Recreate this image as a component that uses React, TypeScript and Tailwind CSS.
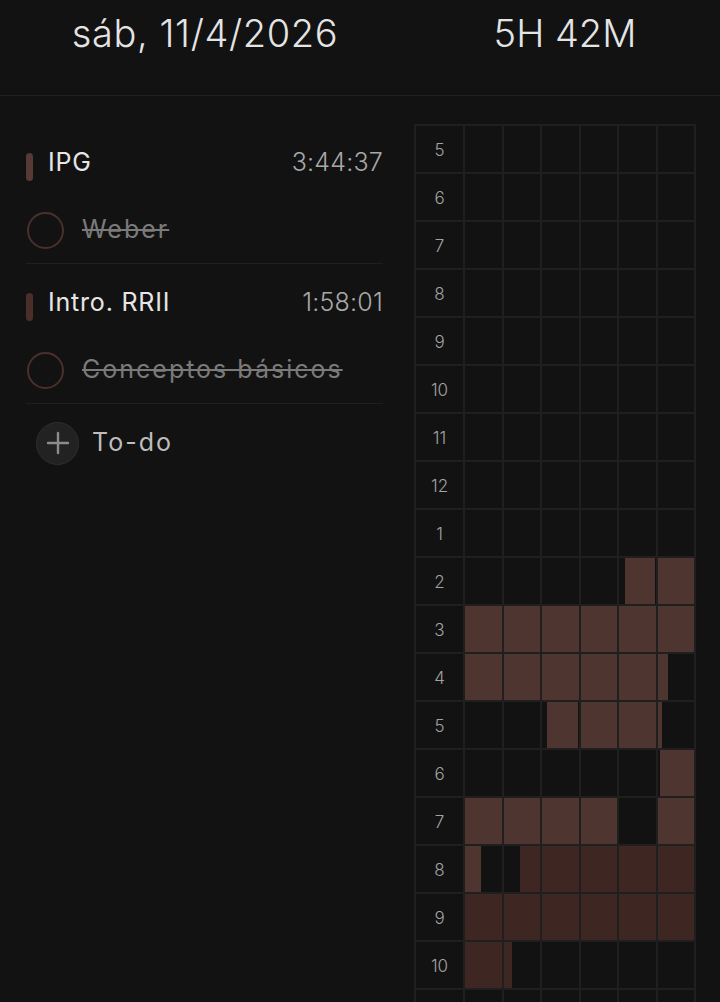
import React from "react";

type Fill = { s: number; e: number; c: "l" | "d" };

const LIGHT = "#4e3530";
const DARK = "#3e2723";

const labels: (number | null)[] = [5, 6, 7, 8, 9, 10, 11, 12, 1, 2, 3, 4, 5, 6, 7, 8, 9, 10, null];

const fills: Record<number, Fill[]> = {
  9: [{ s: 41.6, e: 60, c: "l" }],
  10: [{ s: 0, e: 60, c: "l" }],
  11: [{ s: 0, e: 52.9, c: "l" }],
  12: [{ s: 21.4, e: 51.2, c: "l" }],
  13: [{ s: 50.7, e: 60, c: "l" }],
  14: [
    { s: 0, e: 40, c: "l" },
    { s: 50, e: 60, c: "l" },
  ],
  15: [
    { s: 0, e: 4.4, c: "l" },
    { s: 14.5, e: 60, c: "d" },
  ],
  16: [{ s: 0, e: 60, c: "d" }],
  17: [{ s: 0, e: 12.3, c: "d" }],
};

const font = { fontFamily: "Inter, 'Noto Sans', sans-serif" };

function Cell({ col, row }: { col: number; row: number }) {
  const parts = (fills[row] || [])
    .map((f) => {
      const a = Math.max(f.s, col * 10);
      const b = Math.min(f.e, col * 10 + 10);
      if (b <= a) return null;
      return { left: ((a - col * 10) / 10) * 100, width: ((b - a) / 10) * 100, c: f.c };
    })
    .filter(Boolean) as { left: number; width: number; c: "l" | "d" }[];
  return (
    <div className="relative flex-1 h-full border-r-2 border-[#1f1f1f]">
      {parts.map((p, i) => (
        <div
          key={i}
          className="absolute top-0 bottom-0"
          style={{ left: `${p.left}%`, width: `${p.width}%`, background: p.c === "l" ? LIGHT : DARK }}
        />
      ))}
    </div>
  );
}

function Group({
  title,
  time,
  task,
  bar,
}: {
  title: string;
  time: string;
  task: string;
  bar: string;
}) {
  return (
    <div className="border-b border-[#1f1f1f] pt-[15px] pb-[9px]">
      <div className="flex h-[48px] items-center">
        <div className="mt-[8px] h-[28px] w-[7px] rounded-full" style={{ background: bar }} />
        <div className="ml-[15px] text-[25px] tracking-[0.8px] text-[#e6e6e6]">{title}</div>
        <div className="ml-auto text-[25px] font-light tracking-[0.2px] text-[#a8a8a8]">{time}</div>
      </div>
      <div className="mt-[19px] flex h-[48px] items-center">
        <div className="ml-[1px] h-[37px] w-[37px] rounded-full border-2 border-[#4a2f2b]" />
        <div className="ml-[18px] text-[25px] tracking-[2px] text-[#7a7a7a] line-through decoration-[#7a7a7a]">
          {task}
        </div>
      </div>
    </div>
  );
}

export default function App() {
  return (
    <div className="min-h-screen w-full bg-[#121212] text-white" style={font}>
      <div className="flex h-[96px] border-b border-[#1f1f1f]">
        <div className="w-[410px] pt-[11px] text-center text-[38px] font-light leading-[44px] tracking-[0.6px] text-[#e4e4e4]">
          sáb, 11/4/2026
        </div>
        <div className="flex-1 pt-[11px] text-center text-[38px] font-light leading-[44px] text-[#e4e4e4]">
          5H 42M
        </div>
      </div>
      <div className="flex gap-[31px] pl-[26px] pr-[24px] pt-[28px]">
        <div className="w-[357px] shrink-0">
          <Group title="IPG" time="3:44:37" task="Weber" bar="#573a34" />
          <Group title="Intro. RRII" time="1:58:01" task="Conceptos básicos" bar="#4a2e29" />
          <div className="mt-[15px] flex h-[48px] items-center">
            <div className="ml-[10px] flex h-[43px] w-[43px] items-center justify-center rounded-full border border-[#2e2e2e] bg-[#222222]">
              <svg width="24" height="24" viewBox="0 0 24 24" fill="none" stroke="#8c8c8c" strokeWidth="2.4" strokeLinecap="round">
                <path d="M12 2v20M2 12h20" />
              </svg>
            </div>
            <div className="ml-[13px] text-[25px] tracking-[2px] text-[#bdbdbd]">To-do</div>
          </div>
        </div>
        <div className="w-[282px] shrink-0 border-l-2 border-t-2 border-[#1f1f1f]">
          {labels.map((l, r) => (
            <div key={r} className="flex h-[48px] border-b-2 border-[#1f1f1f]">
              <div className="flex h-full w-[49px] items-center justify-center border-r-2 border-[#1f1f1f] pt-[4px] text-[17px] font-light text-[#a3a3a3]">
                {l}
              </div>
              {[0, 1, 2, 3, 4, 5].map((c) => (
                <Cell key={c} col={c} row={r} />
              ))}
            </div>
          ))}
        </div>
      </div>
    </div>
  );
}
